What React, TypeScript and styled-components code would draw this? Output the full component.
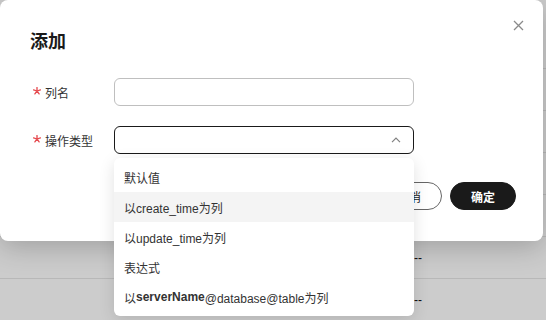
import styled, { createGlobalStyle } from "styled-components";

const GlobalStyle = createGlobalStyle`
  html, body, #root {
    margin: 0;
    height: 100%;
  }

  body {
    font-family: "Liberation Sans", "Noto Sans CJK SC", sans-serif;
    color: #1a1a1a;
  }

  * {
    box-sizing: border-box;
  }
`;

const TABLE_ROWS = 7;

const OPTIONS = [
  { key: "default", label: <>默认值</> },
  { key: "create", label: <>以create_time为列</>, hover: true },
  { key: "update", label: <>以update_time为列</> },
  { key: "expr", label: <>表达式</> },
  {
    key: "server",
    label: (
      <>
        以<b>serverName</b>@database@table为列
      </>
    ),
  },
];

function RequiredMark() {
  // five spoke asterisk, drawn as the star before required labels
  const spokes = [0, 72, 144, 216, 288].map((deg) => {
    const r = (deg - 90) * (Math.PI / 180);
    return `M4 4L${(4 + Math.cos(r) * 3.6).toFixed(2)} ${(4 + Math.sin(r) * 3.6).toFixed(2)}`;
  });
  return (
    <StRequired width="8" height="8" viewBox="0 0 8 8">
      <path d={spokes.join("")} stroke="#e5484d" strokeWidth="1.3" strokeLinecap="round" fill="none" />
    </StRequired>
  );
}

export default function App() {
  return (
    <>
      <GlobalStyle />
      <StPage>
        <StTable>
          {Array.from({ length: TABLE_ROWS }).map((_, i) => (
            <StTableRow key={i}>
              <span />
              <StCell>--</StCell>
            </StTableRow>
          ))}
        </StTable>

        <StMask />

        <StDialog>
          <StClose aria-label="close">
            <svg width="11" height="11" viewBox="0 0 11 11">
              <path d="M1 1L10 10M10 1L1 10" stroke="#8a8a8a" strokeWidth="1.3" fill="none" />
            </svg>
          </StClose>

          <StTitle>添加</StTitle>

          <StForm>
            <StFormRow>
              <StLabel>
                <RequiredMark />
                列名
              </StLabel>
              <StInput />
            </StFormRow>
            <StFormRow>
              <StLabel>
                <RequiredMark />
                操作类型
              </StLabel>
              <StSelectWrap>
                <StSelect>
                  <svg width="10" height="6" viewBox="0 0 10 6">
                    <path d="M1 5.2L5 1.2L9 5.2" stroke="#808080" strokeWidth="1.2" fill="none" />
                  </svg>
                </StSelect>
                <StDropdown>
                  {OPTIONS.map((o) => (
                    <StOption key={o.key} hover={o.hover}>
                      {o.label}
                    </StOption>
                  ))}
                </StDropdown>
              </StSelectWrap>
            </StFormRow>
          </StForm>

          <StFooter>
            <StButton>取消</StButton>
            <StButton primary>确定</StButton>
          </StFooter>
        </StDialog>
      </StPage>
    </>
  );
}

const StPage = styled.div`
  position: relative;
  height: 100vh;
  overflow: hidden;
  background: #ffffff;
`;

const StTable = styled.div`
  padding-top: 27px;
`;

const StTableRow = styled.div`
  height: 42px;

  display: grid;
  grid-template-columns: 414px 1fr;
  align-items: center;

  border-bottom: 1px solid #e6e6e6;
`;

const StCell = styled.span`
  font-size: 12px;
  color: #111111;
`;

const StMask = styled.div`
  position: absolute;
  inset: 0;

  background: rgba(0, 0, 0, 0.2);
`;

const StDialog = styled.div`
  position: absolute;
  top: 0;
  left: 0;

  width: 543px;
  padding: 30px 27px 31px 30px;

  background: #ffffff;
  border-radius: 8px;
  box-shadow: 0 6px 28px rgba(0, 0, 0, 0.22);
`;

const StClose = styled.button`
  position: absolute;
  top: 19px;
  right: 18px;

  width: 13px;
  height: 13px;
  padding: 0;

  display: flex;
  justify-content: center;
  align-items: center;

  border: none;
  background: none;
`;

const StTitle = styled.h2`
  margin: 0;

  font-size: 18px;
  line-height: 24px;
  font-weight: 700;
  color: #1a1a1a;
`;

const StForm = styled.div`
  margin-top: 24px;

  display: flex;
  flex-direction: column;
  gap: 20px;
`;

const StFormRow = styled.div`
  display: flex;
  align-items: center;
`;

const StLabel = styled.label`
  width: 84px;
  padding-left: 3px;

  display: flex;
  align-items: center;
  gap: 4px;

  font-size: 12px;
  color: #333333;
`;

const StRequired = styled.svg`
  flex: none;
  margin-top: -2px;
`;

const StInput = styled.div`
  width: 300px;
  height: 28px;

  border: 1px solid #bfbfbf;
  border-radius: 6px;
`;

const StSelectWrap = styled.div`
  position: relative;
  width: 300px;
`;

const StSelect = styled.div`
  height: 28px;
  padding-right: 12px;

  display: flex;
  justify-content: flex-end;
  align-items: center;

  border: 1px solid #1a1a1a;
  border-radius: 6px;
`;

const StDropdown = styled.ul`
  position: absolute;
  top: calc(100% + 4px);
  left: 0;
  z-index: 2;

  width: 100%;
  margin: 0;
  padding: 4px 0;

  list-style: none;
  background: #ffffff;
  border-radius: 6px;
  box-shadow: 0 4px 16px rgba(0, 0, 0, 0.12);
`;

const StOption = styled.li<{ hover?: boolean }>`
  height: 30px;
  padding-left: 10px;

  display: flex;
  align-items: center;

  font-size: 12px;
  color: #333333;
  background: ${({ hover }) => (hover ? "#f4f4f4" : "transparent")};

  b {
    font-weight: 700;
  }
`;

const StFooter = styled.div`
  margin-top: 28px;

  display: flex;
  justify-content: flex-end;
  gap: 8px;
`;

const StButton = styled.button<{ primary?: boolean }>`
  width: 66px;
  height: 28px;

  font-family: inherit;
  font-size: 12px;
  font-weight: ${({ primary }) => (primary ? 700 : 400)};
  color: ${({ primary }) => (primary ? "#ffffff" : "#1a1a1a")};

  background: ${({ primary }) => (primary ? "#1a1a1a" : "#ffffff")};
  border: 1px solid ${({ primary }) => (primary ? "#1a1a1a" : "#666666")};
  border-radius: 14px;
`;
